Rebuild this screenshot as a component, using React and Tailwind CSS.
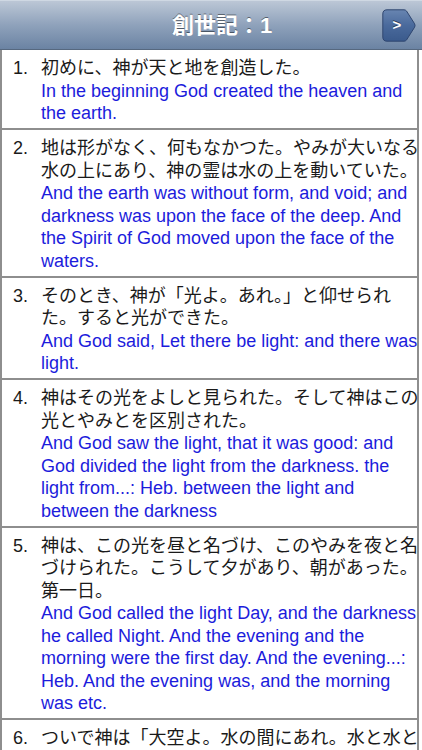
import React from 'react'

const verses = [
  {
    n: 1,
    ja: ['初めに、神が天と地を創造した。'],
    en: ['In the beginning God created the heaven and', 'the earth.'],
  },
  {
    n: 2,
    ja: ['地は形がなく、何もなかつた。やみが大いなる', '水の上にあり、神の霊は水の上を動いていた。'],
    en: [
      'And the earth was without form, and void; and',
      'darkness was upon the face of the deep. And',
      'the Spirit of God moved upon the face of the',
      'waters.',
    ],
  },
  {
    n: 3,
    ja: ['そのとき、神が「光よ。あれ。」と仰せられ', 'た。すると光ができた。'],
    en: ['And God said, Let there be light: and there was', 'light.'],
  },
  {
    n: 4,
    ja: ['神はその光をよしと見られた。そして神はこの', '光とやみとを区別された。'],
    en: [
      'And God saw the light, that it was good: and',
      'God divided the light from the darkness. the',
      'light from...: Heb. between the light and',
      'between the darkness',
    ],
  },
  {
    n: 5,
    ja: ['神は、この光を昼と名づけ、このやみを夜と名', 'づけられた。こうして夕があり、朝があった。', '第一日。'],
    en: [
      'And God called the light Day, and the darkness',
      'he called Night. And the evening and the',
      'morning were the first day. And the evening...:',
      'Heb. And the evening was, and the morning',
      'was etc.',
    ],
  },
  {
    n: 6,
    ja: ['ついで神は「大空よ。水の間にあれ。水と水と', 'の間に区別があるように。」と仰せられた。'],
    en: ['And God said, Let there be a firmament in the', 'midst of the waters, and let it divide the', 'waters from the waters.'],
  },
]

function NextButton() {
  return (
    <button type="button" className="relative mr-[6px] w-[34px] h-[33px] flex items-center justify-center">
      <svg className="absolute inset-0" width="34" height="33" viewBox="0 0 34 33">
        <defs>
          <linearGradient id="nb" x1="0" y1="0" x2="0" y2="1">
            <stop offset="0" stopColor="#6885b1" />
            <stop offset="0.5" stopColor="#4a6a9c" />
            <stop offset="1" stopColor="#3a5a8c" />
          </linearGradient>
        </defs>
        <path
          d="M5 0.8 H22 Q23.5 0.8 24.5 2 L32.6 14.8 Q33.5 16.5 32.6 18.2 L24.5 31 Q23.5 32.2 22 32.2 H5 Q0.8 32.2 0.8 28 V5 Q0.8 0.8 5 0.8 Z"
          fill="url(#nb)"
          stroke="#2f4670"
          strokeWidth="1"
        />
      </svg>
      <span className="relative text-white text-[15px] font-bold pr-[4px] [text-shadow:0_-1px_0_rgba(0,0,0,0.5)]">&gt;</span>
    </button>
  )
}

export default function App() {
  return (
    <div className="w-[422px] h-[750px] overflow-hidden bg-white font-['Liberation_Sans','Noto_Sans_CJK_JP',sans-serif]">
      <div className="h-[50px] flex items-center bg-gradient-to-b from-[#bcc7d6] via-[#8fa2bb] to-[#6b83a3] border-t border-[#cfd8e3] border-b border-b-[#56687f]">
        <div className="flex-1 pl-[62px] text-center text-white text-[22px] font-bold [text-shadow:0_-1px_0_rgba(0,0,0,0.45)]">
          創世記：1
        </div>
        <NextButton />
      </div>

      <div className="w-[419px] border-x-2 border-[#8e8e8e]">
        {verses.map((v) => (
          <div key={v.n} className="flex border-b-2 border-[#8e8e8e] pt-[7px] pb-[3.5px] text-[18px] leading-[22.5px]">
            <div className="w-[39px] shrink-0 pl-[11px] text-[#1a1a1a]">{v.n}.</div>
            <div className="flex-1 min-w-0">
              {v.ja.map((line, i) => (
                <div key={i} className="whitespace-nowrap text-[#1a1a1a]">
                  {line}
                </div>
              ))}
              {v.en.map((line, i) => (
                <div key={i} className="whitespace-nowrap text-[#1c1cdc]">
                  {line}
                </div>
              ))}
            </div>
          </div>
        ))}
      </div>
    </div>
  )
}
